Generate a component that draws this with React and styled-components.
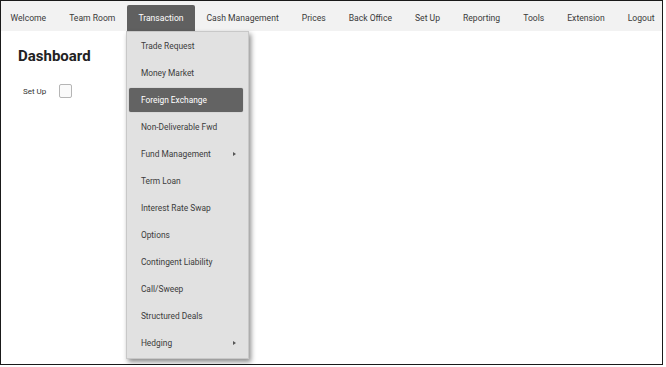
import React from "react";
import styled, { createGlobalStyle } from "styled-components";

const Global = createGlobalStyle`
  html, body { margin: 0; padding: 0; background: #fff; }
  body { font-family: Roboto, "Liberation Sans", Arial, sans-serif; }
  * { box-sizing: border-box; }
`;

const Frame = styled.div`
  width: 663px;
  height: 365px;
  border: 1.5px solid #1a1a1a;
  position: relative;
  background: #fff;
`;

const NavBar = styled.nav`
  height: 30px;
  background: #f2f2f2;
  display: flex;
  align-items: flex-end;
  padding-left: 0;
`;

const NavItem = styled.div`
  position: relative;
  height: 26px;
  padding: 0 11.5px;
  display: flex;
  align-items: center;
  font-size: 8.6px;
  color: ${(p) => (p.$active ? "#fff" : "#3a3a3a")};
  background: ${(p) => (p.$active ? "#606060" : "transparent")};
  border-radius: 2px 2px 0 0;
  white-space: nowrap;
  &:first-child {
    margin-left: -2px;
  }
`;

const Menu = styled.div`
  position: absolute;
  top: 26px;
  left: -1px;
  width: 123px;
  background: #e1e1e1;
  border: 1px solid #c8c8c8;
  box-shadow: 2px 3px 5px rgba(0, 0, 0, 0.45);
  display: flex;
  flex-direction: column;
  padding: 0 0 2px;
  z-index: 5;
`;

const MenuItem = styled.div`
  height: 27px;
  display: flex;
  align-items: center;
  justify-content: space-between;
  font-size: 8.4px;
  color: ${(p) => (p.$selected ? "#fff" : "#3c3c3c")};
  padding: 0 12px 0 14px;
  position: relative;
  &::before {
    content: "";
    display: ${(p) => (p.$selected ? "block" : "none")};
    position: absolute;
    left: 2px;
    right: 5px;
    top: 1.5px;
    bottom: 1.5px;
    background: #636363;
    border-radius: 2px;
    box-shadow: 0 0 1px rgba(0,0,0,0.4);
  }
`;

const ItemLabel = styled.span`
  position: relative;
`;

const Arrow = styled.span`
  width: 0;
  height: 0;
  border-top: 2.5px solid transparent;
  border-bottom: 2.5px solid transparent;
  border-left: 3px solid #555;
`;

const Content = styled.main`
  padding: 15px 17px;
`;

const Title = styled.h1`
  margin: 0;
  font-size: 15px;
  font-weight: 700;
  color: #222;
  line-height: 20px;
`;

const Field = styled.div`
  display: flex;
  align-items: center;
  gap: 13px;
  margin-top: 18px;
  padding-left: 5px;
`;

const Label = styled.label`
  font-size: 8px;
  color: #333;
`;

const Check = styled.span`
  width: 13px;
  height: 14px;
  border: 1px solid #b5b5b5;
  border-radius: 2px;
  background: #fafafa;
`;

const navItems = [
  "Welcome",
  "Team Room",
  "Transaction",
  "Cash Management",
  "Prices",
  "Back Office",
  "Set Up",
  "Reporting",
  "Tools",
  "Extension",
  "Logout",
];

const menuItems = [
  { label: "Trade Request" },
  { label: "Money Market" },
  { label: "Foreign Exchange", selected: true },
  { label: "Non-Deliverable Fwd" },
  { label: "Fund Management", sub: true },
  { label: "Term Loan" },
  { label: "Interest Rate Swap" },
  { label: "Options" },
  { label: "Contingent Liability" },
  { label: "Call/Sweep" },
  { label: "Structured Deals" },
  { label: "Hedging", sub: true },
];

export default function App() {
  return (
    <>
      <Global />
      <Frame>
        <NavBar>
          {navItems.map((n) => (
            <NavItem key={n} $active={n === "Transaction"}>
              {n}
              {n === "Transaction" && (
                <Menu>
                  {menuItems.map((m) => (
                    <MenuItem key={m.label} $selected={m.selected}>
                      <ItemLabel>{m.label}</ItemLabel>
                      {m.sub && <Arrow />}
                    </MenuItem>
                  ))}
                </Menu>
              )}
            </NavItem>
          ))}
        </NavBar>
        <Content>
          <Title>Dashboard</Title>
          <Field>
            <Label>Set Up</Label>
            <Check />
          </Field>
        </Content>
      </Frame>
    </>
  );
}
